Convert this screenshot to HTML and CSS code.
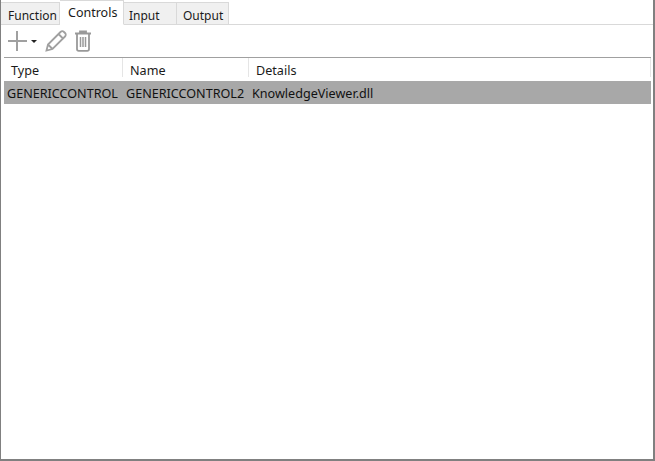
FILE: index.html
```html
<!DOCTYPE html>
<html lang="en">
<head>
<meta charset="utf-8">
<title>Controls</title>
<link rel="stylesheet" href="styles.css">
</head>
<body>
<div class="window">
  <div class="tabs">
    <div class="tab tab-function">Function</div>
    <div class="tab tab-controls active">Controls</div>
    <div class="tab tab-input">Input</div>
    <div class="tab tab-output">Output</div>
  </div>
  <div class="toolbar">
    <svg class="icon-add" width="32" height="22" viewBox="0 0 32 22">
      <path d="M11 1v20M2 11h19" fill="none" stroke="#a0a0a0" stroke-width="2"/>
      <path d="M25 10h6l-3 3z" fill="#222"/>
    </svg>
    <svg class="icon-edit" width="22" height="22" viewBox="0 0 22 22">
      <path d="M1.500 20.500l1.500-6L15.500 2c1-1 2.500-1 3.500 0l1 1c1 1 1 2.500 0 3.500L7.500 19zM3 14.500l4.500 4.500M13.500 4l4.500 4.500" fill="none" stroke="#a0a0a0" stroke-width="1.800"/>
    </svg>
    <svg class="icon-trash" width="18" height="22" viewBox="0 0 18 22">
      <path d="M1 3.500h16M6 3.500V1.500h6v2M3 3.500v15.500c0 1 .8 1.800 1.800 1.800h8.400c1 0 1.800-.8 1.800-1.800V3.500" fill="none" stroke="#999" stroke-width="1.800"/>
      <path d="M6.500 7v10M9 7v10M11.500 7v10" fill="none" stroke="#999" stroke-width="1.500"/>
    </svg>
  </div>
  <div class="table">
    <div class="row head">
      <div class="cell col-type">Type</div>
      <div class="cell col-name">Name</div>
      <div class="cell col-details">Details</div>
    </div>
    <div class="row selected">
      <div class="cell col-type">GENERICCONTROL</div>
      <div class="cell col-name">GENERICCONTROL2</div>
      <div class="cell col-details">KnowledgeViewer.dll</div>
    </div>
  </div>
</div>
</body>
</html>
```
FILE: styles.css
```css
* { box-sizing: border-box; }
html, body { margin: 0; padding: 0; background: #fff; }
body { width: 655px; height: 461px; overflow: hidden; }
.window {
  width: 655px;
  height: 461px;
  display: flex;
  flex-direction: column;
  border: 1px solid #808080;
  border-top: 0;
  border-right-width: 2px;
  border-bottom-width: 2px;
  font: 12.600px/16px "Noto Sans", "Open Sans", sans-serif;
  color: #1a1a1a;
}
.tabs {
  display: flex;
  align-items: flex-end;
  height: 25px;
  border-bottom: 1px solid #d9d9d9;
  flex: none;
  font-size: 12px;
}
.tab {
  height: 23px;
  margin-bottom: -1px;
  padding: 5px 0 0 7px;
  background: #f0f0f0;
  border: 1px solid #d9d9d9;
  border-left: 0;
}
.tab-function { width: 59px; }
.tab-controls { width: 64px; }
.tab-input { width: 53px; padding-left: 5px; }
.tab-output { width: 52px; padding-left: 6px; }
.tab.active {
  height: 25px;
  background: #fff;
  border-bottom-color: #fff;
  padding-top: 4px;
  padding-left: 8px;
  font-size: 12.500px;
}
.toolbar {
  display: flex;
  align-items: center;
  height: 32px;
  padding: 0 0 0 5px;
  flex: none;
}
.icon-add { margin-right: 7px; }
.icon-edit { margin-right: 7px; }
.table {
  margin: 0 2px 0 3px;
  border-top: 1px solid #a0a0a0;
  flex: none;
}
.row { display: flex; }
.head { height: 23px; }
.head .cell { height: 19px; border-right: 1px solid #e5e5e5; padding-top: 5px; }
.selected { height: 23px; background: #a8a8a8; padding-top: 5px; color: #111; }
.col-type { width: 119px; padding-left: 7px; }
.col-name { width: 126px; padding-left: 7px; }
.col-details { flex: 1; padding-left: 7px; }
.selected .col-type { padding-left: 3px; }
.selected .col-name { padding-left: 3px; }
.selected .col-details { padding-left: 3px; }
```
